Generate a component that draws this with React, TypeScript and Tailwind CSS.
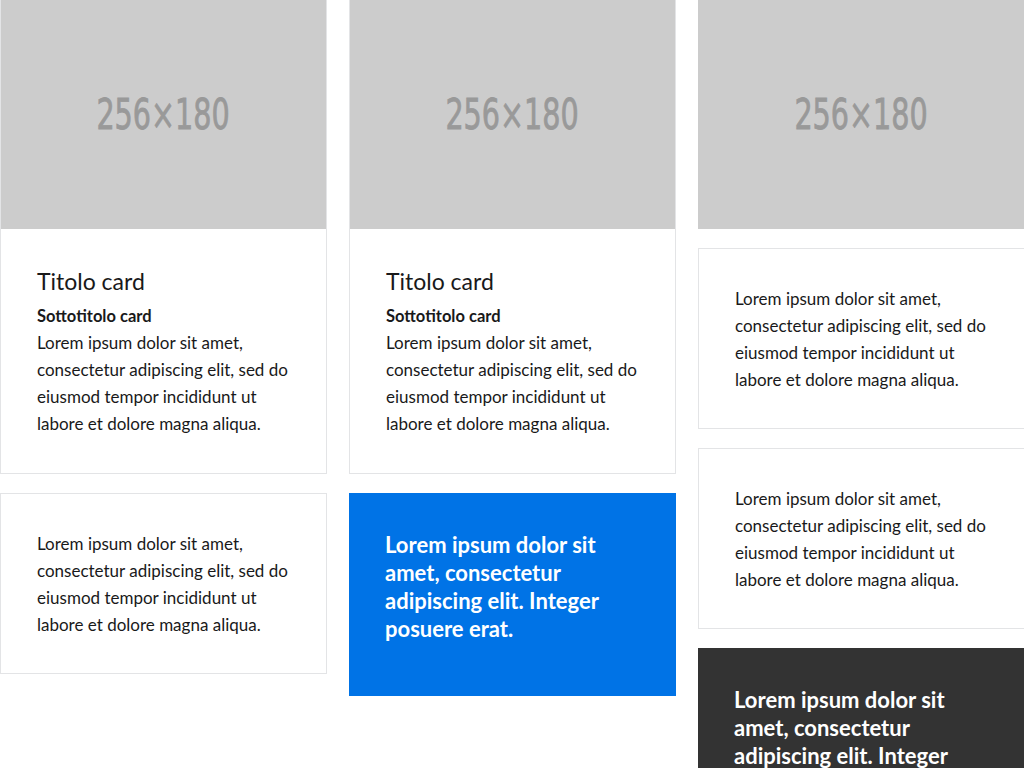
import React from 'react';

const body = ['Lorem ipsum dolor sit amet,', 'consectetur adipiscing elit, sed do', 'eiusmod tempor incididunt ut', 'labore et dolore magna aliqua.'];
const bold = ['Lorem ipsum dolor sit', 'amet, consectetur', 'adipiscing elit. Integer', 'posuere erat.'];

const Lines: React.FC<{ lines: string[] }> = ({ lines }) => (
  <>
    {lines.map((l, i) => (
      <span key={i} className="block whitespace-nowrap">{l}</span>
    ))}
  </>
);

const Placeholder: React.FC = () => (
  <div className="h-[229px] bg-[#cccccc] flex items-center justify-center">
    <span className="text-[#999999] text-[43px] font-['DejaVu_Sans_Condensed',sans-serif] [-webkit-text-stroke:0.8px_#999999] scale-x-[0.74]">
      256×180
    </span>
  </div>
);

const TitledCard: React.FC = () => (
  <div className="border border-[#e3e4e6] border-t-0">
    <Placeholder />
    <div className="px-9 pt-9 pb-9">
      <h3 className="text-[23px] leading-[32px] text-[#19191a]">Titolo card</h3>
      <p className="mt-[6px] text-[16.5px] leading-[26px] font-bold text-[#19191a]">Sottotitolo card</p>
      <p className="text-[17px] leading-[27px] text-[#19191a]"><Lines lines={body} /></p>
    </div>
  </div>
);

const TextCard: React.FC = () => (
  <div className="border border-[#e3e4e6] px-9 pt-9 pb-[35px]">
    <p className="text-[17px] leading-[27px] text-[#19191a]"><Lines lines={body} /></p>
  </div>
);

export default function App() {
  return (
    <div className="w-[1024px] h-[768px] overflow-hidden bg-white font-['Lato','Open_Sans',sans-serif]">
      <div className="grid grid-cols-[327px_327px_327px] gap-x-[22px] w-[1025px]">
        <div className="flex flex-col gap-[19px]">
          <TitledCard />
          <TextCard />
        </div>
        <div className="flex flex-col gap-[19px]">
          <TitledCard />
          <div className="bg-[#0073e6] px-9 pt-[38px] pb-[53px]">
            <p className="text-[22px] leading-[28px] font-bold text-white"><Lines lines={bold} /></p>
          </div>
        </div>
        <div className="flex flex-col gap-[19px]">
          <Placeholder />
          <TextCard />
          <TextCard />
          <div className="bg-[#333333] px-9 pt-[38px] pb-[53px]">
            <p className="text-[22px] leading-[28px] font-bold text-white"><Lines lines={bold} /></p>
          </div>
        </div>
      </div>
    </div>
  );
}
